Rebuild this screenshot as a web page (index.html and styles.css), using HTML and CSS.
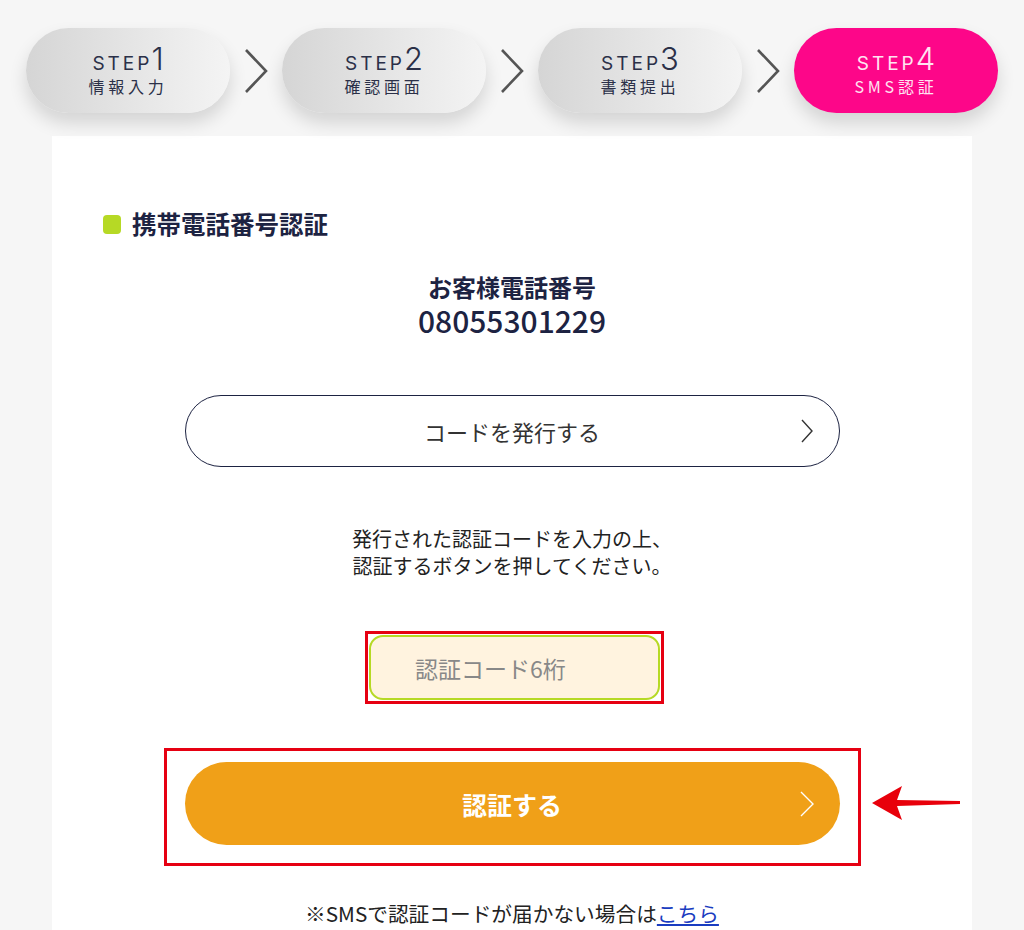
FILE: index.html
```html
<!DOCTYPE html>
<html lang="ja">
<head>
  <meta charset="UTF-8">
  <title>SMS認証</title>
  <link rel="stylesheet" href="styles.css">
</head>
<body>
  <div class="steps">
    <div class="step">
      <span class="step-no">STEP<b>1</b></span>
      <span class="step-name">情報入力</span>
    </div>
    <div class="step-arrow">
      <svg width="24" height="46" viewBox="0 0 24 46"><path d="M2 2 L22 23 L2 44" fill="none" stroke="#555" stroke-width="2.6"/></svg>
    </div>
    <div class="step">
      <span class="step-no">STEP<b>2</b></span>
      <span class="step-name">確認画面</span>
    </div>
    <div class="step-arrow">
      <svg width="24" height="46" viewBox="0 0 24 46"><path d="M2 2 L22 23 L2 44" fill="none" stroke="#555" stroke-width="2.6"/></svg>
    </div>
    <div class="step">
      <span class="step-no">STEP<b>3</b></span>
      <span class="step-name">書類提出</span>
    </div>
    <div class="step-arrow">
      <svg width="24" height="46" viewBox="0 0 24 46"><path d="M2 2 L22 23 L2 44" fill="none" stroke="#555" stroke-width="2.6"/></svg>
    </div>
    <div class="step step-current">
      <span class="step-no">STEP<b>4</b></span>
      <span class="step-name">SMS認証</span>
    </div>
  </div>

  <main class="card">
    <h1 class="title">携帯電話番号認証</h1>

    <div class="phone">
      <p>お客様電話番号</p>
      <p class="phone-num">08055301229</p>
    </div>

    <button class="btn-outline" type="button">
      コードを発行する
      <svg class="chev" width="12" height="24" viewBox="0 0 12 24"><path d="M1 1 L11 12 L1 23" fill="none" stroke="#333" stroke-width="1.4"/></svg>
    </button>

    <p class="note">発行された認証コードを入力の上、<br>認証するボタンを押してください。</p>

    <div class="mark mark-input">
      <input type="text" placeholder="認証コード6桁">
    </div>

    <div class="submit-row">
      <div class="mark mark-submit">
        <button class="btn-submit" type="button">
          認証する
          <svg class="chev" width="14" height="26" viewBox="0 0 14 26"><path d="M1 1 L13 13 L1 25" fill="none" stroke="#fff" stroke-width="1.4"/></svg>
        </button>
      </div>
      <svg class="red-arrow" width="90" height="40" viewBox="0 0 90 40">
        <path d="M0 20 L30 3 L25 17 L88 18 L88 21 L25 23 L30 37 Z" fill="#e8000b"/>
      </svg>
    </div>

    <p class="help">※SMSで認証コードが届かない場合は<a href="#">こちら</a></p>
  </main>
</body>
</html>
```

FILE: styles.css
```css
body {
  margin: 0;
  background-color: #f6f6f6;
  font-family: "Noto Sans CJK JP", "Noto Sans", sans-serif;
  color: #1d2342;
}
.steps {
  display: flex;
  padding: 28px 26px 0;
}
.step {
  width: 204px;
  height: 85px;
  border-radius: 43px;
  background: linear-gradient(90deg, #d5d5d5, #f4f4f4);
  box-shadow: 0 10px 18px rgba(0, 0, 0, 0.14);
  display: flex;
  flex-direction: column;
  align-items: center;
  justify-content: center;
  color: #2b3048;
}
.step-no {
  font-family: "Inter", sans-serif;
  font-size: 19px;
  letter-spacing: 3px;
  line-height: 28px;
  display: flex;
  align-items: baseline;
}
.step-no b {
  font-size: 31px;
  font-weight: 300;
  letter-spacing: 0;
  margin-left: -1px;
}
.step-name {
  font-size: 16px;
  letter-spacing: 3.8px;
  line-height: 20px;
  margin-top: -2px;
}
.step-current {
  background: #fd0689;
  color: #ffe3f1;
}
.step-arrow {
  width: 52px;
  display: flex;
  justify-content: center;
  align-items: center;
}
.card {
  margin: 23px 52px 0;
  background: white;
  padding: 72px 51px 40px;
  min-height: 700px;
  display: flex;
  flex-direction: column;
  align-items: center;
}
.title {
  align-self: flex-start;
  margin: 0;
  font-size: 24.5px;
  line-height: 32px;
  font-weight: bold;
  display: flex;
  align-items: center;
}
.title::before {
  content: "";
  width: 18px;
  height: 19px;
  border-radius: 4px;
  background: #b6d925;
  margin-right: 11px;
}
.phone {
  margin-top: 31px;
  text-align: center;
}
.phone p {
  margin: 0;
  font-size: 24px;
  line-height: 32px;
  font-weight: bold;
}
.phone .phone-num {
  font-size: 30px;
  line-height: 34px;
  font-weight: 500;
}
.btn-outline, .btn-submit {
  position: relative;
  width: 655px;
  border-radius: 42px;
  font-family: inherit;
  cursor: pointer;
}
.btn-outline {
  margin-top: 58px;
  height: 72px;
  background: white;
  border: 1.5px solid #1d2342;
  font-size: 22px;
  color: #333;
}
.chev {
  position: absolute;
  right: 26px;
  top: 50%;
  transform: translateY(-50%);
}
.note {
  margin: 58px 0 0;
  font-size: 20px;
  line-height: 27px;
  text-align: center;
  color: #222;
}
.mark {
  border: 3px solid #e60012;
}
.mark-input {
  margin-top: 52px;
  margin-left: 5px;
  padding: 1px;
}
.mark-input input {
  display: block;
  box-sizing: border-box;
  width: 291px;
  height: 65px;
  border: 2px solid #b6d925;
  border-radius: 14px;
  background: #fff3df;
  padding: 0 0 0 44px;
  font-family: inherit;
  font-size: 23px;
  outline: none;
}
.mark-input input::placeholder {
  color: #888;
}
.submit-row {
  position: relative;
  align-self: stretch;
  display: flex;
  justify-content: center;
  margin-top: 44px;
}
.mark-submit {
  padding: 11px 18px 18px;
}
.btn-submit {
  display: block;
  height: 83px;
  border: none;
  background: #f0a018;
  color: white;
  font-size: 25px;
  font-weight: bold;
}
.btn-submit .chev {
  right: 26px;
}
.red-arrow {
  position: absolute;
  right: -41px;
  top: 35px;
}
.help {
  margin: 34px 0 0;
  font-size: 20.7px;
  line-height: 26px;
  color: #222;
}
.help a {
  color: #1a3cc0;
}
```
